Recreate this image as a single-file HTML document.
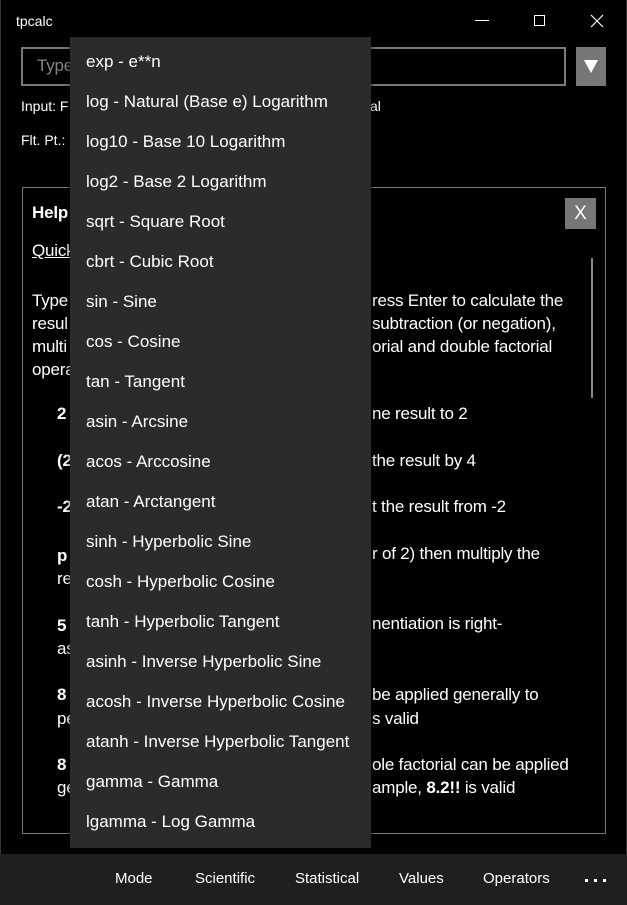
<!DOCTYPE html>
<html><head><meta charset="utf-8"><style>
*{margin:0;padding:0;box-sizing:border-box}
body{width:627px;height:905px;background:#000;color:#fff;font-family:"Liberation Sans",sans-serif;position:relative;overflow:hidden}
.a{position:absolute;white-space:nowrap}
.t{font-size:16px;letter-spacing:-0.2px}
b{font-weight:bold}
#dd{position:absolute;left:70px;top:37px;width:301px;height:811px;background:#2b2b2b;box-shadow:0 0 6px rgba(0,0,0,.6)}
#dd div{position:absolute;left:16px;font-size:17px;letter-spacing:0px;color:#fff;white-space:nowrap}
</style></head><body>
<div class="a" style="left:0;top:0;width:627px;height:905px;border-left:1px solid #333;border-right:1px solid #333"></div>
<div class="a" style="left:16px;top:13px;font-size:14px">tpcalc</div>
<div class="a" style="left:475px;top:20px;width:14px;height:1px;background:#fff"></div>
<div class="a" style="left:534px;top:15px;width:11px;height:11px;border:1px solid #fff"></div>
<svg class="a" style="left:590px;top:14px" width="14" height="14"><path d="M1 1L13 13M13 1L1 13" stroke="#fff" stroke-width="1.2"/></svg>
<div class="a" style="left:21px;top:47px;width:545px;height:39px;border:2px solid #7a7a7a"></div>
<div class="a t" style="left:37px;top:56px;color:#888;font-size:17px">Type</div>
<div class="a" style="left:576px;top:47px;width:30px;height:39px;background:#777"></div>
<svg class="a" style="left:583px;top:58px" width="16" height="16"><path d="M1 2H15L8 15Z" fill="#fff"/></svg>
<div class="a" style="left:21px;top:98px;font-size:14px">Input: F</div>
<div class="a" style="left:370px;top:98px;font-size:14px">al</div>
<div class="a" style="left:21px;top:132px;font-size:14px">Flt. Pt.:</div>
<div class="a" style="left:22px;top:187px;width:584px;height:647px;border:1px solid #777"></div>
<div class="a" style="left:565px;top:198px;width:31px;height:31px;background:#777;font-size:19px;text-align:center;line-height:31px">X</div>
<div class="a" style="left:591px;top:258px;width:2px;height:140px;background:#888"></div>
<div class="a t" style="left:32px;top:203px;font-size:17px"><b>Help</b></div>
<div class="a t" style="left:32px;top:241px;font-size:17px;text-decoration:underline">Quick</div>
<div class="a t" style="left:32px;top:289px;font-size:17px;line-height:23px">Type<br>resul<br>multi<br>opera</div>
<div class="a t" style="left:372px;top:289px;font-size:17px;line-height:23px">ress Enter to calculate the<br>subtraction (or negation),<br>orial and double factorial</div>
<div class="a t" style="left:57px;top:404px;font-size:17px"><b>2</b></div>
<div class="a t" style="left:372px;top:404px;font-size:17px">ne result to 2</div>
<div class="a t" style="left:57px;top:451px;font-size:17px"><b>(2</b></div>
<div class="a t" style="left:372px;top:451px;font-size:17px">the result by 4</div>
<div class="a t" style="left:57px;top:497px;font-size:17px"><b>-2</b></div>
<div class="a t" style="left:372px;top:497px;font-size:17px">t the result from -2</div>
<div class="a t" style="left:57px;top:544px;font-size:17px;line-height:23px"><b>p</b><br>re</div>
<div class="a t" style="left:372px;top:544px;font-size:17px">r of 2) then multiply the</div>
<div class="a t" style="left:57px;top:614px;font-size:17px;line-height:23px"><b>5</b><br>as</div>
<div class="a t" style="left:372px;top:614px;font-size:17px">nentiation is right-</div>
<div class="a t" style="left:57px;top:683px;font-size:17px;line-height:24px"><b>8</b><br>pe</div>
<div class="a t" style="left:372px;top:683px;font-size:17px;line-height:24px">be applied generally to<br>s valid</div>
<div class="a t" style="left:57px;top:753px;font-size:17px;line-height:23px"><b>8</b><br>ge</div>
<div class="a t" style="left:372px;top:753px;font-size:17px;line-height:23px">ole factorial can be applied<br>ample, <b>8.2!!</b> is valid</div>
<div class="a" style="left:0;top:854px;width:627px;height:51px;background:#1f1f1f"></div>
<div class="a" style="top:870px;left:115px;font-size:15px">Mode</div>
<div class="a" style="top:870px;left:195px;font-size:15px">Scientific</div>
<div class="a" style="top:870px;left:295px;font-size:15px">Statistical</div>
<div class="a" style="top:870px;left:399px;font-size:15px">Values</div>
<div class="a" style="top:870px;left:483px;font-size:15px">Operators</div>
<div class="a" style="top:879px;left:585px;width:3px;height:3px;background:#fff"></div>
<div class="a" style="top:879px;left:594px;width:3px;height:3px;background:#fff"></div>
<div class="a" style="top:879px;left:603px;width:3px;height:3px;background:#fff"></div>
<div id="dd">
<div style="top:15px">exp - e**n</div>
<div style="top:55px">log - Natural (Base e) Logarithm</div>
<div style="top:95px">log10 - Base 10 Logarithm</div>
<div style="top:135px">log2 - Base 2 Logarithm</div>
<div style="top:175px">sqrt - Square Root</div>
<div style="top:215px">cbrt - Cubic Root</div>
<div style="top:255px">sin - Sine</div>
<div style="top:295px">cos - Cosine</div>
<div style="top:335px">tan - Tangent</div>
<div style="top:375px">asin - Arcsine</div>
<div style="top:415px">acos - Arccosine</div>
<div style="top:455px">atan - Arctangent</div>
<div style="top:495px">sinh - Hyperbolic Sine</div>
<div style="top:535px">cosh - Hyperbolic Cosine</div>
<div style="top:575px">tanh - Hyperbolic Tangent</div>
<div style="top:615px">asinh - Inverse Hyperbolic Sine</div>
<div style="top:655px">acosh - Inverse Hyperbolic Cosine</div>
<div style="top:695px">atanh - Inverse Hyperbolic Tangent</div>
<div style="top:735px">gamma - Gamma</div>
<div style="top:775px">lgamma - Log Gamma</div>
</div>
</body></html>
